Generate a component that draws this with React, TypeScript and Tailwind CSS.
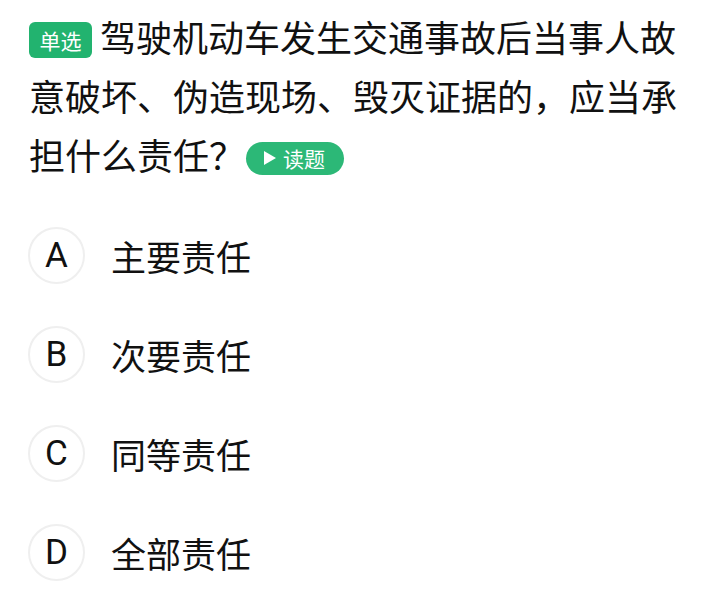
import React from "react";

const options = [
  { key: "A", text: "主要责任" },
  { key: "B", text: "次要责任" },
  { key: "C", text: "同等责任" },
  { key: "D", text: "全部责任" },
];

export default function App() {
  return (
    <div
      className="w-[720px] h-[612px] bg-white text-[#111111] overflow-hidden"
      style={{ fontFamily: '"Noto Sans CJK SC", "Noto Sans", sans-serif' }}
    >
      <div className="pl-[29px] pt-[7px] w-[680px]">
        <div className="text-[36px] leading-[59px]">
          <span className="inline-flex items-center justify-center align-middle w-[63px] h-[36px] mr-[8px] rounded-[6px] bg-[#22b36f] text-white text-[21px] leading-none -mt-[4px]">
            单选
          </span>
          驾驶机动车发生交通事故后当事人故意破坏、伪造现场、毁灭证据的，应当承担什么责任？
          <span className="inline-flex items-center align-middle ml-[1px] -mt-[4px] w-[98px] h-[33px] rounded-full bg-[#2cb877] text-white text-[21px] leading-none pl-[18px]">
            <svg width="12" height="14" viewBox="0 0 12 14" className="mr-[7px]">
              <path d="M0 0 L12 7 L0 14 Z" fill="white" />
            </svg>
            读题
          </span>
        </div>
      </div>

      <div className="mt-[22px] pl-[28px] flex flex-col">
        {options.map((o) => (
          <div key={o.key} className="flex items-center h-[99px]">
            <div
              className="w-[57px] h-[57px] rounded-full border-2 border-[#efefef] flex items-center justify-center text-[35px] leading-none"
              style={{ fontFamily: 'Roboto, "Noto Sans", sans-serif' }}
            >
              {o.key}
            </div>
            <div className="ml-[26px] text-[35px] leading-none">{o.text}</div>
          </div>
        ))}
      </div>
    </div>
  );
}
